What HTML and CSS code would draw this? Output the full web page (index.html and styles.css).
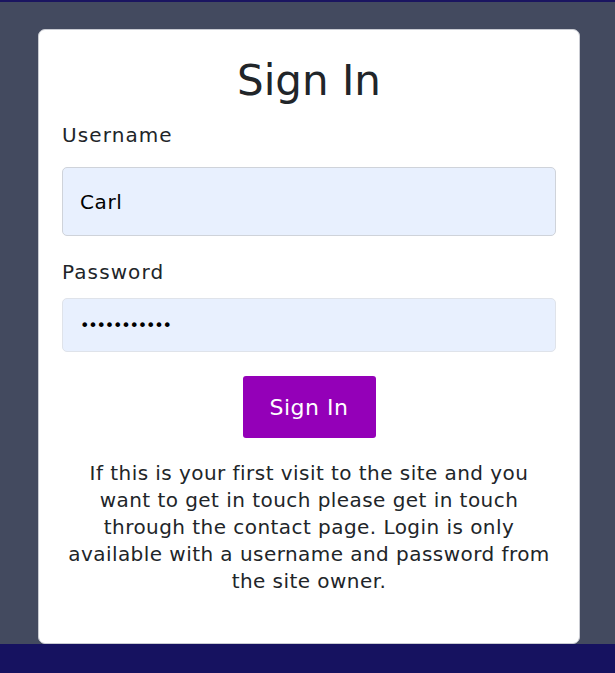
FILE: index.html
```html
<!DOCTYPE html>
<html>
<head>
<meta charset="utf-8">
<link rel="stylesheet" href="styles.css">
</head>
<body>
<div class="topline"></div>
<main class="main">
  <form class="card">
    <h1 class="title">Sign In</h1>
    <label class="label" for="u">Username</label>
    <div class="input input-user">Carl</div>
    <label class="label label-pass" for="p">Password</label>
    <div class="input input-pass">•••••••••••</div>
    <div class="actions"><button type="button" class="btn">Sign In</button></div>
    <p class="note">If this is your first visit to the site and you want to get in touch please get in touch through the contact page. Login is only available with a username and password from the site owner.</p>
  </form>
</main>
<footer class="footer"></footer>
</body>
</html>
```

FILE: styles.css
```css
html, body { margin: 0; padding: 0; }
body {
  background: #434a5f;
  font-family: "DejaVu Sans", sans-serif;
  color: #212529;
  height: 673px;
  display: flex;
  flex-direction: column;
}
.topline { height: 2px; background: #1a1560; }
.main { flex: 1; padding: 27px 0 0 38px; }
.card {
  box-sizing: border-box;
  width: 542px;
  height: 615px;
  background: #fff;
  border: 1px solid #c9cbd2;
  border-radius: 7px;
  padding: 0 23px 0 23px;
}
.title {
  margin: 26px 0 0;
  text-align: center;
  font-weight: 400;
  font-size: 42px;
  line-height: 50px;
}
.label { display: block; font-size: 20px; letter-spacing: 1.1px; line-height: 24px; margin-top: 17px; }
.label-pass { margin-top: 24px; }
.input {
  box-sizing: border-box;
  background: #e8f0fe;
  border: 1px solid #cfd3da;
  border-radius: 5px;
  font-size: 20px;
  letter-spacing: 0.6px;
  display: flex;
  align-items: center;
  padding-left: 17px;
  color: #000;
}
.input-user { height: 69px; margin-top: 20px; }
.input-pass { height: 54px; margin-top: 14px; border-color: #dfe3ea; font-size: 16px; letter-spacing: -1.2px; }
.actions { display: flex; justify-content: center; margin-top: 24px; }
.btn {
  width: 133px; height: 62px;
  background: #9400b8;
  color: #fff;
  border: none;
  border-radius: 3px;
  font-family: inherit;
  font-size: 22px;
  letter-spacing: 0.5px;
}
.note {
  margin: 22px 0 0;
  text-align: center;
  font-size: 20px;
  letter-spacing: 0.45px;
  line-height: 27px;
  padding: 0;
}
.footer { height: 29px; background: #161260; }
```
